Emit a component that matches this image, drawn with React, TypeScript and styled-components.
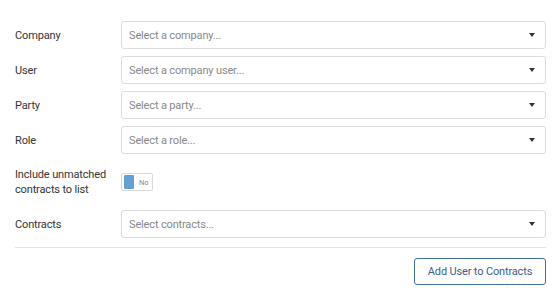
import React from "react";
import styled, { createGlobalStyle } from "styled-components";

const Global = createGlobalStyle`
  html, body { margin: 0; padding: 0; background: #fff; }
  body { font-family: Roboto, "Noto Sans", sans-serif; color: #333; }
`;

const Form = styled.div`
  padding: 21px 13px 0 15px;
`;

const Row = styled.div<{ $spaced?: boolean }>`
  display: grid;
  grid-template-columns: 106px 1fr;
  align-items: center;
  margin: ${(p) => (p.$spaced ? "13px 0 13px" : "0 0 7px")};
`;

const Label = styled.label`
  font-size: 11px;
  line-height: 15px;
  letter-spacing: -0.15px;
  color: #333;
`;

const Select = styled.div`
  height: 28px;
  box-sizing: border-box;
  border: 1px solid #dcdcdc;
  border-radius: 3px;
  display: flex;
  align-items: center;
  justify-content: space-between;
  padding: 0 10px 0 7px;
  font-size: 11px;
  letter-spacing: -0.15px;
  color: #888;
`;

const Caret = styled.span`
  width: 0;
  height: 0;
  border-left: 3.5px solid transparent;
  border-right: 3.5px solid transparent;
  border-top: 4px solid #333;
`;

const Toggle = styled.div`
  width: 32px;
  height: 18px;
  box-sizing: border-box;
  border: 1px solid #d8d8d8;
  border-radius: 2px;
  display: flex;
  align-items: center;
  padding: 0 2px;
  gap: 5px;
`;

const Knob = styled.span`
  width: 10px;
  height: 14px;
  background: #64a0d4;
  border-radius: 1px;
`;

const ToggleText = styled.span`
  font-size: 7.5px;
  color: #888;
`;

const Divider = styled.hr`
  border: 0;
  border-top: 1px solid #e3e3e3;
  margin: 9px 0 10px;
`;

const Footer = styled.div`
  display: flex;
  justify-content: flex-end;
`;

const Button = styled.button`
  height: 27px;
  width: 132px;
  box-sizing: border-box;
  border: 1px solid #3f6f9a;
  border-radius: 3px;
  background: #fff;
  color: #3a5f85;
  font-family: inherit;
  font-size: 11px;
  letter-spacing: -0.15px;
  padding: 0;
`;

const SelectField = ({ label, placeholder }: { label: string; placeholder: string }) => (
  <Row>
    <Label>{label}</Label>
    <Select>
      <span>{placeholder}</span>
      <Caret />
    </Select>
  </Row>
);

export default function App() {
  return (
    <>
      <Global />
      <Form>
        <SelectField label="Company" placeholder="Select a company..." />
        <SelectField label="User" placeholder="Select a company user..." />
        <SelectField label="Party" placeholder="Select a party..." />
        <SelectField label="Role" placeholder="Select a role..." />
        <Row $spaced>
          <Label>
            Include unmatched
            <br />
            contracts to list
          </Label>
          <Toggle>
            <Knob />
            <ToggleText>No</ToggleText>
          </Toggle>
        </Row>
        <SelectField label="Contracts" placeholder="Select contracts..." />
        <Divider />
        <Footer>
          <Button>Add User to Contracts</Button>
        </Footer>
      </Form>
    </>
  );
}
